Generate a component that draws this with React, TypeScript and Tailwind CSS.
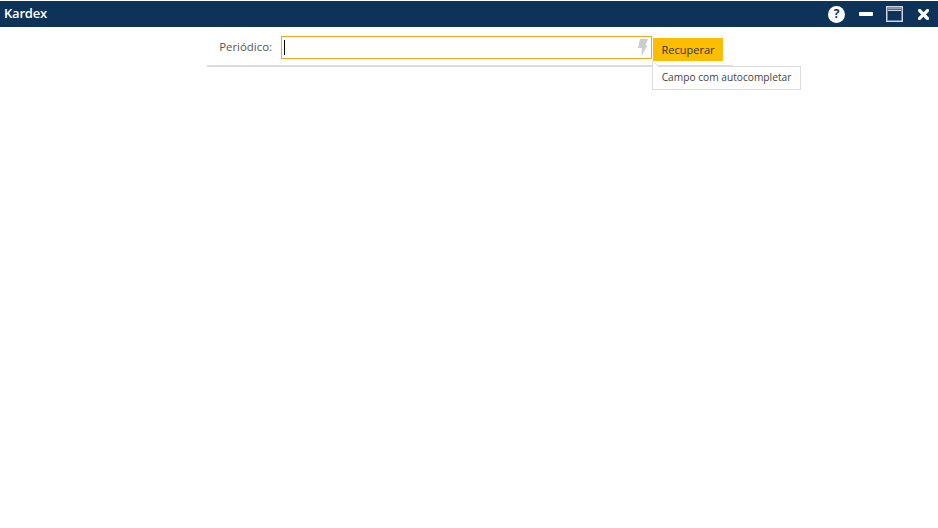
export default function App() {
  return (
    <div className="h-[528px] w-[938px] overflow-hidden bg-white font-['Open_Sans',sans-serif]">
      {/* title bar */}
      <div className="mt-px flex h-[26px] items-center justify-between bg-[#0e3358] pl-1 pr-[9px]">
        <span className="text-[13px] font-semibold tracking-[-0.2px] text-white">Kardex</span>
        <div className="flex items-center">
          <span className="grid h-[17px] w-[17px] place-items-center rounded-full bg-white text-[12px] font-bold leading-none text-[#0e3358]">?</span>
          <span className="ml-[14px] h-[4px] w-[14px] rounded-[1px] bg-white" />
          <svg className="ml-[13px]" width="17" height="16" viewBox="0 0 17 16">
            <rect x="0.75" y="0.75" width="15.5" height="14.5" fill="none" stroke="#cdd5de" strokeWidth="1.5" />
            <path d="M2 2.5 H15" stroke="#8fa1b4" strokeWidth="2" />
            <path d="M2 4.5 H15" stroke="#cdd5de" strokeWidth="1" />
          </svg>
          <svg className="ml-[15px]" width="11" height="11" viewBox="0 0 11 11">
            <path d="M1.5 1.5 L9.5 9.5 M9.5 1.5 L1.5 9.5" stroke="#fff" strokeWidth="3.2" strokeLinecap="square" />
          </svg>
        </div>
      </div>

      {/* form */}
      <div className="relative ml-[207px] w-[526px]">
        <div className="flex h-[40px] items-start border-b-2 border-[#dcdcdc] pt-[9px]">
          <label className="mt-[2px] w-[65px] text-right text-[11.4px] leading-[18px] text-[#555]">Periódico:</label>
          <div className="relative ml-[9px] flex h-[23px] w-[371px] items-center border border-[#f2a71e] pl-[2px]">
            <span className="h-[15px] w-px bg-black" />
            <svg className="absolute right-[3px] top-[2px]" width="11" height="17" viewBox="0 0 11 17">
              <path d="M3 0 H11 L8.5 6 H10.5 L4.5 17 L4.8 9 H1 Z" fill="#cdcdcd" />
            </svg>
          </div>
          <button className="ml-[1px] mt-[2px] h-[23px] w-[70px] bg-[#fdbd00] pt-[2px] text-[11px] text-[#333]">Recuperar</button>
        </div>

        {/* tooltip */}
        <div className="absolute left-[445px] top-[39px] flex h-[24px] w-[149px] items-center justify-center border border-[#dcdcdc] bg-white text-[10.2px] text-[#444]">
          Campo com autocompletar
        </div>
        <svg className="absolute left-[445px] top-[33px]" width="9" height="8" viewBox="0 0 9 8">
          <path d="M0.5 7 V1 L7 7 Z" fill="#fff" />
          <path d="M0.5 7 V1 L7 7" fill="none" stroke="#dcdcdc" />
        </svg>
      </div>
    </div>
  );
}
